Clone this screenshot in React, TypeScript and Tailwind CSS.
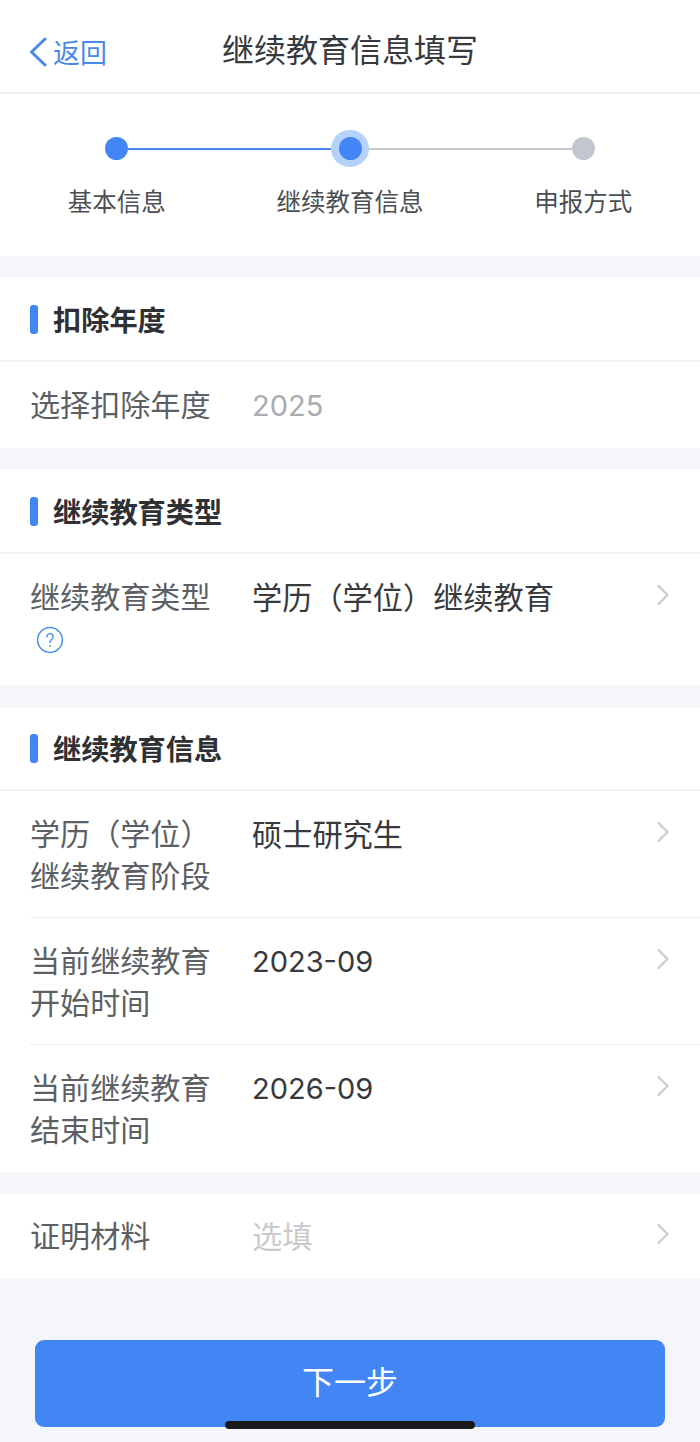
import React from "react";

const FONT = "font-['Noto_Sans_CJK_SC','Noto_Sans',sans-serif]";
const DIGITS = "font-['Inter','Noto_Sans_CJK_SC',sans-serif] text-[29px] mt-[2px]";

function Chevron() {
  return (
    <svg width="14" height="22" viewBox="0 0 14 22" fill="none" className="ml-auto mr-[30px] mt-[9px] shrink-0">
      <path d="M2.5 2 L11.5 11 L2.5 20" stroke="#c9ccd1" strokeWidth="2.4" strokeLinecap="round" strokeLinejoin="round" />
    </svg>
  );
}

function SectionTitle({ children, h = "h-[84px]" }: { children: React.ReactNode; h?: string }) {
  return (
    <div className={`${h} flex items-center pl-[30px] border-b-2 border-[#f1f2f4]`}>
      <div className="w-2 h-[29px] rounded-[3px] bg-[#4286f5] mr-[15px]" />
      <div className="text-[28.2px] font-bold text-[#2e3033] leading-none">{children}</div>
    </div>
  );
}

function Row({
  label,
  value,
  valueClass = "text-[#37393c] text-[30.2px]",
  chevron = true,
  h,
  pt = "pt-[21px]",
  extra,
}: {
  label: string[];
  value: string;
  valueClass?: string;
  chevron?: boolean;
  h: string;
  pt?: string;
  extra?: React.ReactNode;
}) {
  return (
    <div className={`flex items-start ${h} ${pt}`}>
      <div className="w-[222px] shrink-0 text-[30.1px] leading-[41.5px] text-[#5c5f64]">
        {label.map((l) => (
          <div key={l} className="whitespace-nowrap">{l}</div>
        ))}
        {extra}
      </div>
      <div className={`leading-[42px] whitespace-nowrap ${valueClass}`}>{value}</div>
      {chevron && <Chevron />}
    </div>
  );
}

function Help() {
  return (
    <svg width="28" height="28" viewBox="0 0 28 28" fill="none" className="ml-[6px] mt-[9px]">
      <circle cx="14" cy="14" r="12.4" stroke="#4a8fe8" strokeWidth="1.5" />
      <path d="M10.8 11 C10.8 8.8 12.2 7.6 14 7.6 C15.9 7.6 17.2 8.8 17.2 10.6 C17.2 13.2 14 13.6 14 16.6" stroke="#4a8fe8" strokeWidth="1.4" strokeLinecap="round" fill="none" />
      <circle cx="14" cy="20" r="0.9" fill="#4a8fe8" />
    </svg>
  );
}

function Dot({ className }: { className: string }) {
  return <div className={`w-[23px] h-[23px] rounded-full shrink-0 ${className}`} />;
}

export default function App() {
  return (
    <div className={`${FONT} relative w-[700px] h-[1442px] overflow-hidden bg-[#f4f6fa]`}>
      {/* Header */}
      <div className="h-[94px] bg-white border-b-2 border-[#ececee] grid grid-cols-[1fr_auto_1fr] items-center pl-[28px]">
        <div className="flex items-center pt-[11px]">
          <svg width="20" height="30" viewBox="0 0 20 30" fill="none">
            <path d="M17 2 L3.5 15 L17 28" stroke="#4a8ae6" strokeWidth="3" strokeLinecap="round" strokeLinejoin="round" />
          </svg>
          <span className="ml-[5px] text-[27px] leading-[32px] text-[#4a8ae6]">返回</span>
        </div>
        <div className="text-[32px] leading-[40px] text-[#37393c] -ml-[28px] mt-[3px]">继续教育信息填写</div>
        <div />
      </div>

      {/* Stepper */}
      <div className="h-[162px] bg-white pt-[36px]">
        <div className="flex items-center h-[37px] px-[105px]">
          <Dot className="bg-[#4286f5]" />
          <div className="flex-1 h-[2px] bg-[#4a8ae6]" />
          <div className="w-[38px] h-[37px] rounded-full bg-[#b5d2fb] flex items-center justify-center shrink-0">
            <Dot className="bg-[#4286f5]" />
          </div>
          <div className="flex-1 h-[2px] bg-[#c9c9cc]" />
          <Dot className="bg-[#c4c6cf]" />
        </div>
        <div className="grid grid-cols-3 mt-[17px] text-center text-[24.5px] leading-[34px] text-[#4b4e52]">
          <div>基本信息</div>
          <div>继续教育信息</div>
          <div>申报方式</div>
        </div>
      </div>

      <div className="mt-[22px] bg-white">
        <SectionTitle>扣除年度</SectionTitle>
        <div className="pl-[30px]">
          <Row label={["选择扣除年度"]} value="2025" valueClass={`${DIGITS} text-[#a9acb1]`} chevron={false} h="h-[86px]" />
        </div>
      </div>

      <div className="mt-[22px] bg-white">
        <SectionTitle>继续教育类型</SectionTitle>
        <div className="pl-[30px]">
          <Row label={["继续教育类型"]} value="学历（学位）继续教育" h="h-[131px]" extra={<Help />} />
        </div>
      </div>

      <div className="mt-[23px] bg-white">
        <SectionTitle h="h-[83px]">继续教育信息</SectionTitle>
        <div className="pl-[30px]">
          <div className="border-b border-[#ececee]">
            <Row label={["学历（学位）", "继续教育阶段"]} value="硕士研究生" h="h-[126px]" />
          </div>
          <div className="border-b border-[#ececee]">
            <Row label={["当前继续教育", "开始时间"]} value="2023-09" valueClass={`${DIGITS} text-[#37393c]`} h="h-[126px]" />
          </div>
          <Row label={["当前继续教育", "结束时间"]} value="2026-09" valueClass={`${DIGITS} text-[#37393c]`} h="h-[127px]" />
        </div>
      </div>

      <div className="mt-[22px] bg-white pl-[30px]">
        <Row label={["证明材料"]} value="选填" valueClass="text-[30.2px] text-[#c8cacd]" h="h-[85px]" pt="pt-[20px]" />
      </div>

      <div className="mt-[61px] mx-[35px] h-[87px] pb-[8px] rounded-[9px] bg-[#4286f5] flex items-center justify-center text-white text-[32px] leading-none">
        下一步
      </div>

      <div className="absolute left-[225px] top-[1421px] w-[250px] h-[8px] rounded-full bg-[#1a1a1c]" />
    </div>
  );
}
